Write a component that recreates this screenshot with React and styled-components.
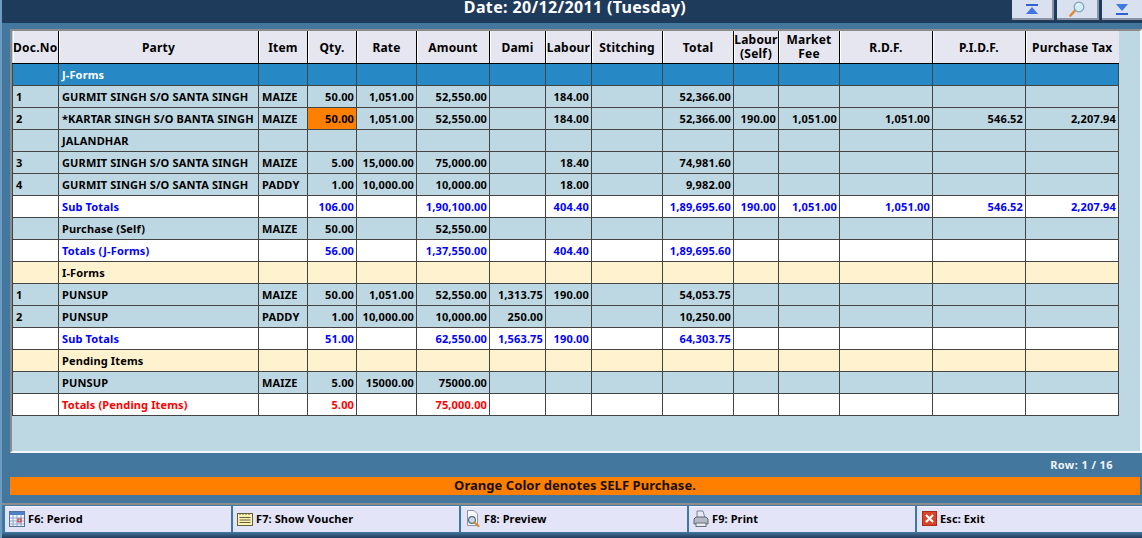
import React from 'react';
import styled, { createGlobalStyle } from 'styled-components';

const GlobalStyle = createGlobalStyle`
  html, body {
    margin: 0;
    padding: 0;
    background: #44779e;
    font-family: "Noto Sans", "Liberation Sans", sans-serif;
  }
`;

const Page = styled.div`
  width: 1142px;
  height: 538px;
  overflow: hidden;
  display: flex;
  flex-direction: column;
  background: #44779e;
  border-left: 2px solid #6d9cc0;
  box-sizing: border-box;
`;

const TitleBar = styled.div`
  height: 23px;
  flex: none;
  margin-left: -2px;
  background: #1f3b5c;
  display: grid;
  grid-template-columns: 1fr auto 1fr;
  align-items: start;
`;

const Title = styled.div`
  grid-column: 2;
  padding-left: 8px;
  color: #fff;
  font-size: 16px;
  font-weight: 700;
  letter-spacing: 0.35px;
  line-height: 15px;
`;

const NavButtons = styled.div`
  grid-column: 3;
  justify-self: end;
  display: flex;
  gap: 3px;
`;

const NavButton = styled.div`
  width: 42px;
  height: 20px;
  box-sizing: border-box;
  background: #d9e0f0;
  border-right: 2px solid #8a94a4;
  border-bottom: 2px solid #8a94a4;
  display: flex;
  align-items: center;
  justify-content: center;
  &:last-child {
    width: 40px;
    border-right: none;
  }
`;

const Panel = styled.div`
  flex: none;
  height: 424px;
  margin: 6px 0 0 8px;
  background: #bed8e3;
  border-top: 2px solid #8c8c8c;
  border-left: 2px solid #8c8c8c;
  border-right: 2px solid #f4f8fa;
  border-bottom: 2px solid #f4f8fa;
  box-sizing: border-box;
`;

const Grid = styled.table`
  width: 1107px;
  table-layout: fixed;
  border-collapse: collapse;
  font-size: 11px;
  font-weight: 700;
  letter-spacing: 0.14px;
  color: #000;
`;

const HeadCell = styled.th`
  height: 32px;
  padding: 1px 0 0;
  background: #e6e6f0;
  border-left: 1px solid #000;
  border-right: 1px solid #000;
  border-bottom: 1px solid #000;
  box-shadow: inset 1px 0 0 #fff;
  font-size: 12px;
  font-weight: 700;
  letter-spacing: 0.2px;
  line-height: 14px;
  box-sizing: border-box;
  &:first-child {
    border-left: none;
  }
  &:last-child {
    border-right: none;
  }
`;

const HeadLabel = styled.div`
  display: flex;
  flex-direction: column;
  align-items: center;
  overflow: hidden;
  white-space: nowrap;
  padding-top: ${({ $single }) => ($single ? '2px' : '0')};
`;

const rowColours = {
  blue: { bg: '#2688c4', fg: '#ffffff' },
  data: { bg: '#bed8e3', fg: '#000000' },
  total: { bg: '#ffffff', fg: '#0000ff' },
  red: { bg: '#ffffff', fg: '#ff0000' },
  cream: { bg: '#fff2cf', fg: '#000000' },
};

const Cell = styled.td`
  height: 20px;
  padding: 1px ${({ $num }) => ($num ? '2px' : '3px')} 0;
  border: 1px solid #444;
  background: ${({ $kind, $self }) => ($self ? '#ff8000' : rowColours[$kind].bg)};
  color: ${({ $kind }) => rowColours[$kind].fg};
  text-align: ${({ $num }) => ($num ? 'right' : 'left')};
  white-space: nowrap;
  overflow: hidden;
  line-height: 14px;
`;

const RowCount = styled.div`
  height: 24px;
  flex: none;
  padding-right: 29px;
  color: #f0f4f8;
  font-size: 11px;
  font-weight: 700;
  letter-spacing: 0.4px;
  line-height: 24px;
  text-align: right;
`;

const Notice = styled.div`
  height: 18px;
  flex: none;
  margin: 0 2px 0 8px;
  background: #ff8000;
  color: #1a1000;
  font-size: 13px;
  font-weight: 700;
  letter-spacing: 0.05px;
  line-height: 16px;
  text-align: center;
`;

const Footer = styled.div`
  margin-top: 8px;
  flex: none;
  height: 29px;
  box-sizing: border-box;
  border-top: 2px solid #8c8c8c;
  padding: 1px 0 0 3px;
  display: grid;
  grid-template-columns: repeat(5, 226px);
  gap: 2px;
`;

const FooterButton = styled.div`
  height: 26px;
  box-sizing: border-box;
  background: #e4e4f8;
  border-left: 1px solid #d0e8f4;
  border-top: 1px solid #f4f4ff;
  padding: 0 0 2px 3px;
  display: flex;
  align-items: center;
  gap: 3px;
  color: #000;
  font-size: 11px;
  font-weight: 700;
  letter-spacing: 0.1px;
  white-space: nowrap;
`;

const IconSlot = styled.span`
  width: 16px;
  height: 18px;
  flex: none;
  display: flex;
  align-items: center;
  justify-content: center;
`;

const BottomEdge = styled.div`
  flex: 1;
  margin-left: -2px;
  background: linear-gradient(#44779e, #1f3b5c);
`;

const columns = [46, 200, 49, 49, 60, 73, 56, 46, 71, 71, 45, 61, 93, 93, 93];

const headers = [
  ['Doc.No'], ['Party'], ['Item'], ['Qty.'], ['Rate'], ['Amount'], ['Dami'], ['Labour'],
  ['Stitching'], ['Total'], ['Labour', '(Self)'], ['Market', 'Fee'], ['R.D.F.'], ['P.I.D.F.'], ['Purchase Tax'],
];

const leftColumns = [0, 1, 2];

const rows = [
  { kind: 'blue', cells: ['', 'J-Forms'] },
  { kind: 'data', cells: ['1', 'GURMIT SINGH S/O SANTA SINGH', 'MAIZE', '50.00', '1,051.00', '52,550.00', '', '184.00', '', '52,366.00'] },
  { kind: 'data', selfQty: true, cells: ['2', '*KARTAR SINGH S/O BANTA SINGH', 'MAIZE', '50.00', '1,051.00', '52,550.00', '', '184.00', '', '52,366.00', '190.00', '1,051.00', '1,051.00', '546.52', '2,207.94'] },
  { kind: 'data', cells: ['', 'JALANDHAR'] },
  { kind: 'data', cells: ['3', 'GURMIT SINGH S/O SANTA SINGH', 'MAIZE', '5.00', '15,000.00', '75,000.00', '', '18.40', '', '74,981.60'] },
  { kind: 'data', cells: ['4', 'GURMIT SINGH S/O SANTA SINGH', 'PADDY', '1.00', '10,000.00', '10,000.00', '', '18.00', '', '9,982.00'] },
  { kind: 'total', cells: ['', 'Sub Totals', '', '106.00', '', '1,90,100.00', '', '404.40', '', '1,89,695.60', '190.00', '1,051.00', '1,051.00', '546.52', '2,207.94'] },
  { kind: 'data', cells: ['', 'Purchase (Self)', 'MAIZE', '50.00', '', '52,550.00'] },
  { kind: 'total', cells: ['', 'Totals (J-Forms)', '', '56.00', '', '1,37,550.00', '', '404.40', '', '1,89,695.60'] },
  { kind: 'cream', cells: ['', 'I-Forms'] },
  { kind: 'data', cells: ['1', 'PUNSUP', 'MAIZE', '50.00', '1,051.00', '52,550.00', '1,313.75', '190.00', '', '54,053.75'] },
  { kind: 'data', cells: ['2', 'PUNSUP', 'PADDY', '1.00', '10,000.00', '10,000.00', '250.00', '', '', '10,250.00'] },
  { kind: 'total', cells: ['', 'Sub Totals', '', '51.00', '', '62,550.00', '1,563.75', '190.00', '', '64,303.75'] },
  { kind: 'cream', cells: ['', 'Pending Items'] },
  { kind: 'data', cells: ['', 'PUNSUP', 'MAIZE', '5.00', '15000.00', '75000.00'] },
  { kind: 'red', cells: ['', 'Totals (Pending Items)', '', '5.00', '', '75,000.00'] },
];

const ArrowUpIcon = () => (
  <svg width="14" height="11" viewBox="0 0 14 11">
    <rect x="1" y="0" width="12" height="2" fill="#2f62d0" />
    <path d="M7 3 L13 10 H1 Z" fill="#3f78e0" />
  </svg>
);

const ArrowDownIcon = () => (
  <svg width="14" height="11" viewBox="0 0 14 11">
    <path d="M1 0 H13 L7 7 Z" fill="#3f78e0" />
    <rect x="1" y="9" width="12" height="2" fill="#2f62d0" />
  </svg>
);

const MagnifierIcon = () => (
  <svg width="16" height="16" viewBox="0 0 16 16">
    <path d="M1.5 14.5 L6 9.5" stroke="#e08a2c" strokeWidth="2.6" strokeLinecap="round" />
    <circle cx="10" cy="6" r="4.8" fill="#cfeefa" stroke="#7f9fb8" strokeWidth="1.2" />
    <path d="M7.5 5 A3 3 0 0 1 10 3" stroke="#fff" strokeWidth="1.2" fill="none" />
  </svg>
);

const CalendarIcon = () => (
  <svg width="16" height="16" viewBox="0 0 16 16">
    <rect x="0.5" y="0.5" width="15" height="15" fill="#f4f8ff" stroke="#56709c" />
    <rect x="1" y="1" width="14" height="3" fill="#4f7fc4" />
    <path d="M1 7 H15 M1 10 H15 M1 13 H15 M4 4 V15 M8 4 V15 M12 4 V15" stroke="#8aa6d0" />
    <rect x="9" y="8" width="3" height="3" fill="none" stroke="#e02020" />
  </svg>
);

const NotepadIcon = () => (
  <svg width="16" height="14" viewBox="0 0 16 14">
    <rect x="0.5" y="1.5" width="15" height="12" fill="#fbf3b4" stroke="#66603a" />
    <path d="M3 1 V3 M6 1 V3 M9 1 V3 M12 1 V3" stroke="#66603a" />
    <path d="M2.5 5.5 H13.5 M2.5 8 H13.5 M2.5 10.5 H13.5" stroke="#66603a" />
  </svg>
);

const PreviewIcon = () => (
  <svg width="16" height="18" viewBox="0 0 16 18">
    <path d="M2.5 0.5 H9 L12.5 4 V15.5 H2.5 Z" fill="#fbfbff" stroke="#8a94a8" />
    <circle cx="7" cy="10" r="3.4" fill="#c8dcec" stroke="#5a6a80" strokeWidth="1.2" />
    <path d="M9.5 12.5 L13.5 16" stroke="#d88a20" strokeWidth="2.2" strokeLinecap="round" />
  </svg>
);

const PrinterIcon = () => (
  <svg width="16" height="18" viewBox="0 0 16 18">
    <path d="M4 1 H10 L12 8 H4 Z" fill="#e6eaf4" stroke="#7c8696" />
    <path d="M1 9 L3 7 H13 L15 9 V14 H1 Z" fill="#b4bac4" stroke="#5e6672" />
    <rect x="3" y="13" width="10" height="3.5" fill="#e8ebf0" stroke="#6a727e" />
  </svg>
);

const ExitIcon = () => (
  <svg width="15" height="15" viewBox="0 0 15 15">
    <rect x="0.5" y="0.5" width="14" height="14" fill="#d8442a" stroke="#a82c14" />
    <path d="M4 4 L11 11 M11 4 L4 11" stroke="#fff" strokeWidth="2.2" />
  </svg>
);

const footerButtons = [
  { label: 'F6: Period', icon: <CalendarIcon /> },
  { label: 'F7: Show Voucher', icon: <NotepadIcon /> },
  { label: 'F8: Preview', icon: <PreviewIcon /> },
  { label: 'F9: Print', icon: <PrinterIcon /> },
  { label: 'Esc: Exit', icon: <ExitIcon /> },
];

const App = () => {
  return (
    <Page>
      <GlobalStyle />
      <TitleBar>
        <Title>Date: 20/12/2011 (Tuesday)</Title>
        <NavButtons>
          <NavButton><ArrowUpIcon /></NavButton>
          <NavButton><MagnifierIcon /></NavButton>
          <NavButton><ArrowDownIcon /></NavButton>
        </NavButtons>
      </TitleBar>
      <Panel>
        <Grid>
          <colgroup>
            {columns.map((width, index) => (
              <col key={index} style={{ width }} />
            ))}
          </colgroup>
          <thead>
            <tr>
              {headers.map((lines, index) => (
                <HeadCell key={index}>
                  <HeadLabel $single={lines.length === 1}>
                    {lines.map((line) => (
                      <span key={line}>{line}</span>
                    ))}
                  </HeadLabel>
                </HeadCell>
              ))}
            </tr>
          </thead>
          <tbody>
            {rows.map((row, rowIndex) => (
              <tr key={rowIndex}>
                {columns.map((_, index) => (
                  <Cell
                    key={index}
                    $kind={row.kind}
                    $num={!leftColumns.includes(index)}
                    $self={row.selfQty && index === 3}
                  >
                    {row.cells[index] || ''}
                  </Cell>
                ))}
              </tr>
            ))}
          </tbody>
        </Grid>
      </Panel>
      <RowCount>Row: 1 / 16</RowCount>
      <Notice>Orange Color denotes SELF Purchase.</Notice>
      <Footer>
        {footerButtons.map((button) => (
          <FooterButton key={button.label}>
            <IconSlot>{button.icon}</IconSlot>
            {button.label}
          </FooterButton>
        ))}
      </Footer>
      <BottomEdge />
    </Page>
  );
};

export default App;
